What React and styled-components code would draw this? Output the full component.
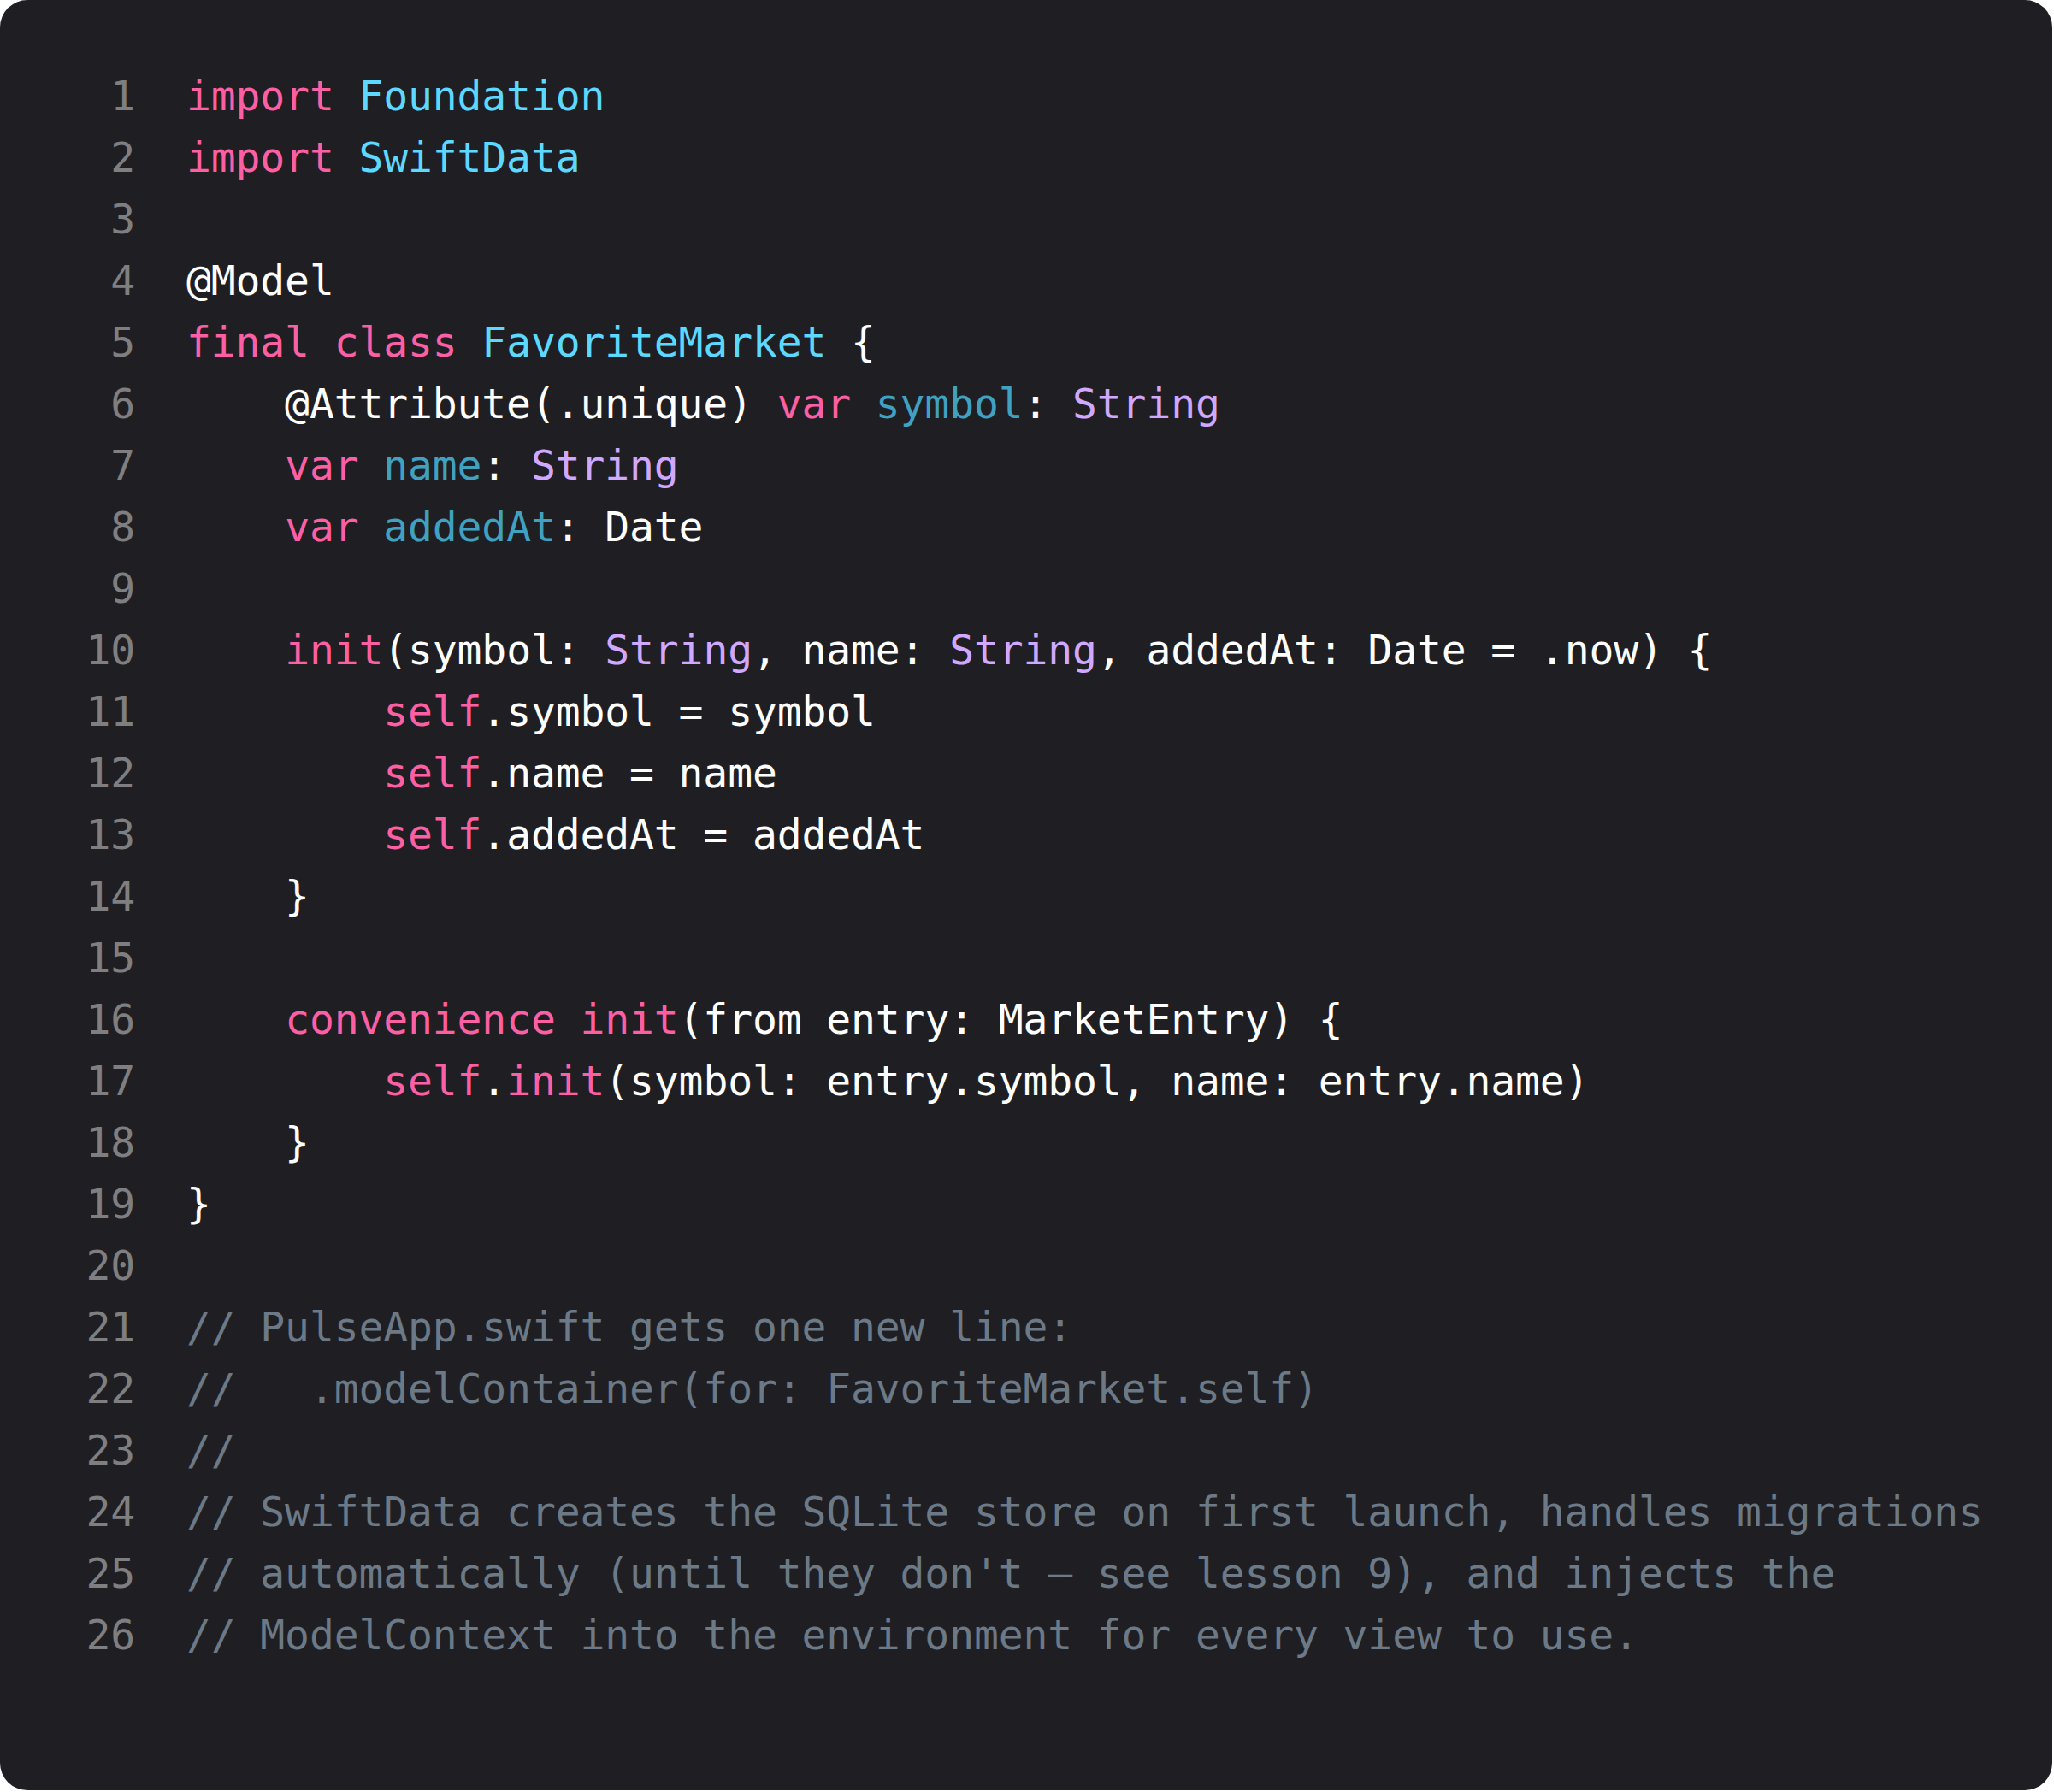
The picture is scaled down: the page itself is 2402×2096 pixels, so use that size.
import React from "react"
import styled, { createGlobalStyle } from "styled-components"

const GlobalStyle = createGlobalStyle`
  html, body {
    margin: 0;
    padding: 0;
    background: #ffffff;
  }
`

// token kinds -> colours (Xcode-ish dark theme)
const colors = {
  kw: "#fc5fa3",
  type: "#5dd8ff",
  other: "#d0a8ff",
  prop: "#41a1c0",
  com: "#6c7986",
  plain: "#ffffff",
}

const lines = [
  [["kw", "import"], ["plain", " "], ["type", "Foundation"]],
  [["kw", "import"], ["plain", " "], ["type", "SwiftData"]],
  [],
  [["plain", "@Model"]],
  [["kw", "final class"], ["plain", " "], ["type", "FavoriteMarket"], ["plain", " {"]],
  [["plain", "    @Attribute(.unique) "], ["kw", "var"], ["plain", " "], ["prop", "symbol"], ["plain", ": "], ["other", "String"]],
  [["plain", "    "], ["kw", "var"], ["plain", " "], ["prop", "name"], ["plain", ": "], ["other", "String"]],
  [["plain", "    "], ["kw", "var"], ["plain", " "], ["prop", "addedAt"], ["plain", ": Date"]],
  [],
  [["plain", "    "], ["kw", "init"], ["plain", "(symbol: "], ["other", "String"], ["plain", ", name: "], ["other", "String"], ["plain", ", addedAt: Date = .now) {"]],
  [["plain", "        "], ["kw", "self"], ["plain", ".symbol = symbol"]],
  [["plain", "        "], ["kw", "self"], ["plain", ".name = name"]],
  [["plain", "        "], ["kw", "self"], ["plain", ".addedAt = addedAt"]],
  [["plain", "    }"]],
  [],
  [["plain", "    "], ["kw", "convenience init"], ["plain", "(from entry: MarketEntry) {"]],
  [["plain", "        "], ["kw", "self"], ["plain", "."], ["kw", "init"], ["plain", "(symbol: entry.symbol, name: entry.name)"]],
  [["plain", "    }"]],
  [["plain", "}"]],
  [],
  [["com", "// PulseApp.swift gets one new line:"]],
  [["com", "//   .modelContainer(for: FavoriteMarket.self)"]],
  [["com", "//"]],
  [["com", "// SwiftData creates the SQLite store on first launch, handles migrations"]],
  [["com", "// automatically (until they don't \u2014 see lesson 9), and injects the"]],
  [["com", "// ModelContext into the environment for every view to use."]],
]

export default function App() {
  return (
    <>
      <GlobalStyle />
      <Card>
        <Code>
          {lines.map((tokens, i) => (
            <Row key={i}>
              <LineNo>{i + 1}</LineNo>
              <LineText>
                {tokens.map(([kind, text], j) => (
                  <Token key={j} $kind={kind}>
                    {text}
                  </Token>
                ))}
              </LineText>
            </Row>
          ))}
        </Code>
      </Card>
    </>
  )
}

const Card = styled.div`
  width: 2400px;
  height: 2094px;
  box-sizing: border-box;
  background-color: #1f1f23;
  border-radius: 32px;
  padding: 76px 0 0 100px;
`
const Code = styled.div`
  display: flex;
  flex-direction: column;
  font-family: "DejaVu Sans Mono", "Liberation Mono", monospace;
  font-size: 48px;
  line-height: 72px;
  letter-spacing: -0.12px;
`
const Row = styled.div`
  display: grid;
  grid-template-columns: 58px auto;
  column-gap: 60px;
  height: 72px;
`
const LineNo = styled.span`
  color: #7f7f82;
  text-align: right;
`
const LineText = styled.span`
  white-space: pre;
  color: #ffffff;
`
const Token = styled.span`
  color: ${(p) => colors[p.$kind]};
`
